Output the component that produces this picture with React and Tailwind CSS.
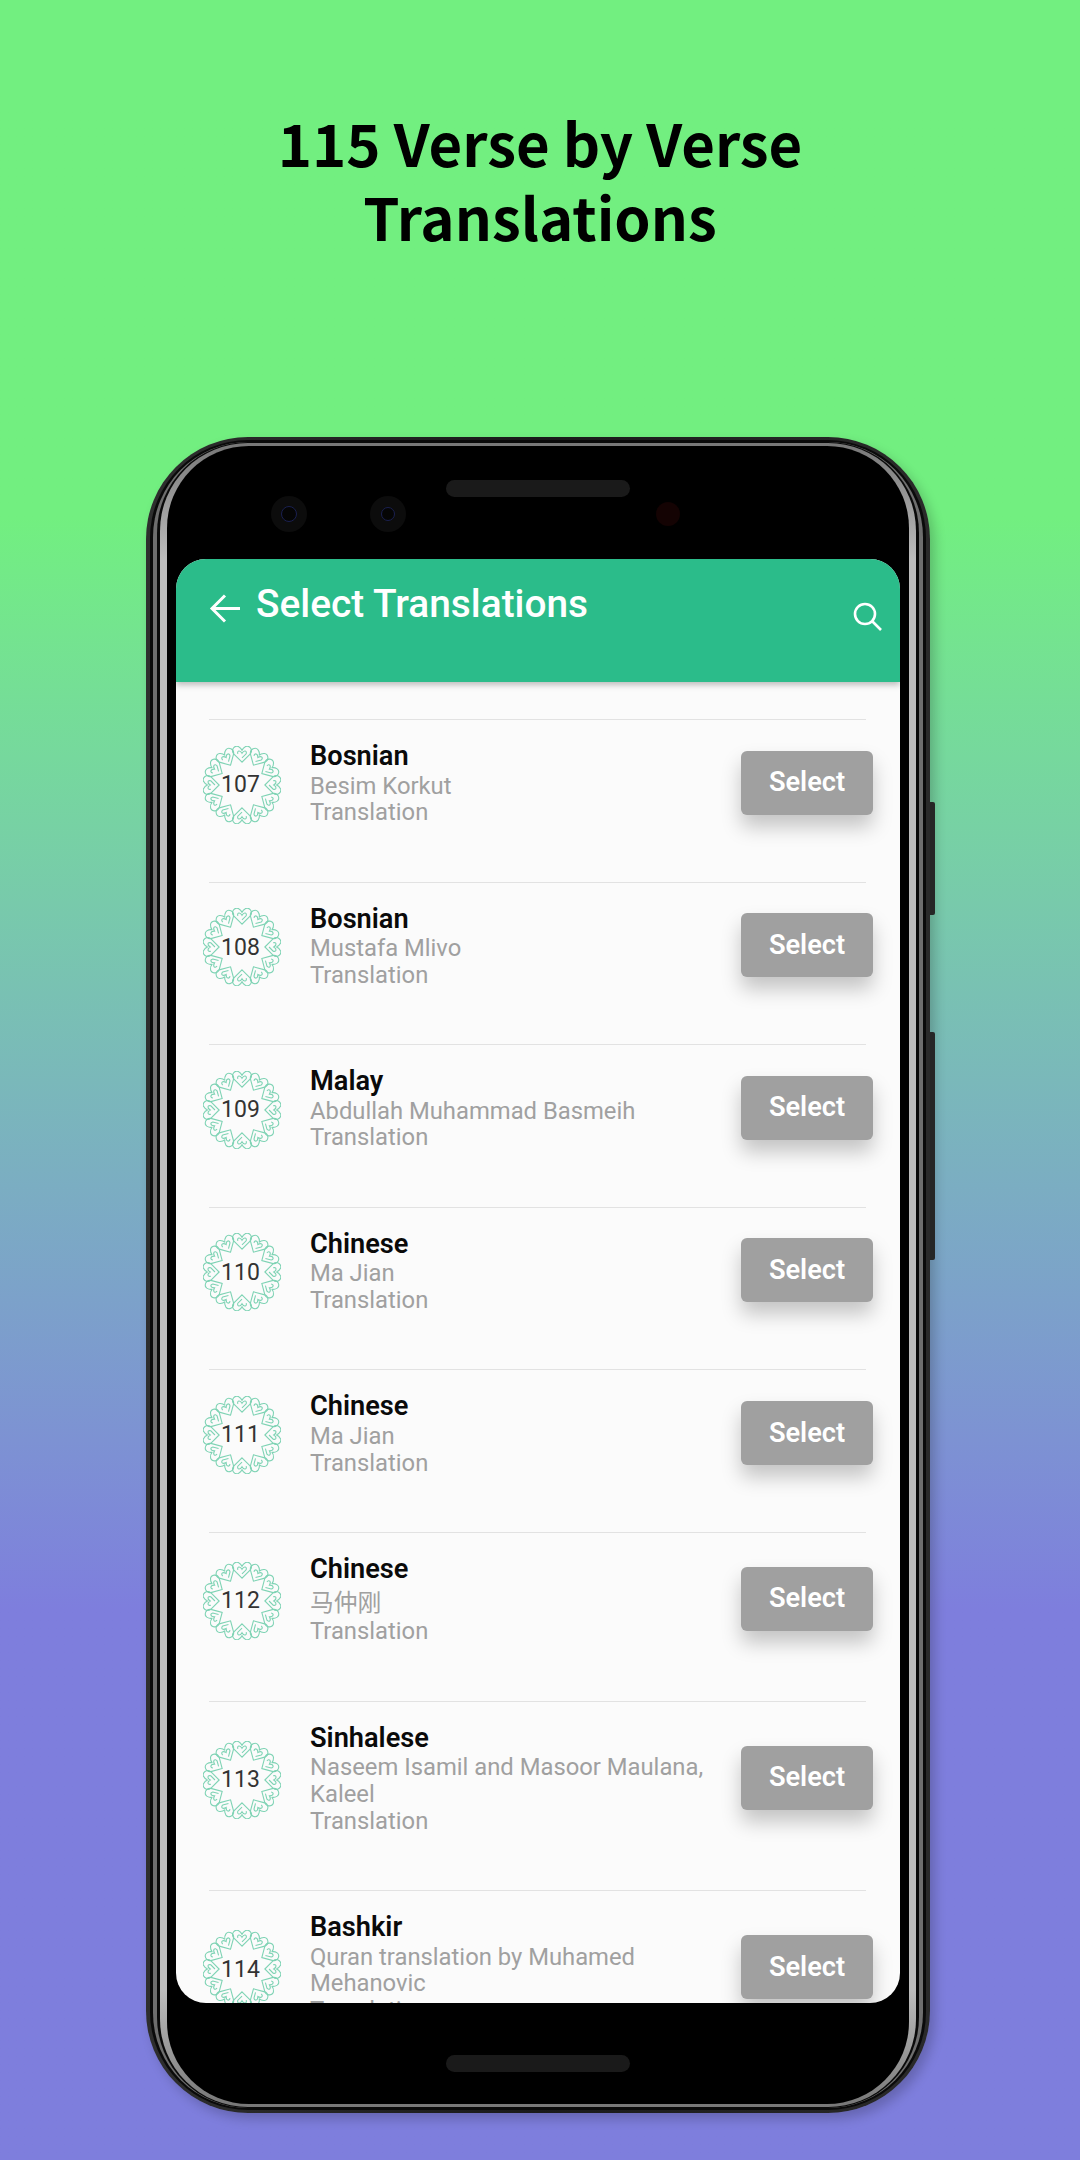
const rows = [
  { n: 107, lang: "Bosnian", author: "Besim Korkut" },
  { n: 108, lang: "Bosnian", author: "Mustafa Mlivo" },
  { n: 109, lang: "Malay", author: "Abdullah Muhammad Basmeih" },
  { n: 110, lang: "Chinese", author: "Ma Jian" },
  { n: 111, lang: "Chinese", author: "Ma Jian" },
  { n: 112, lang: "Chinese", author: "马仲刚", cjk: true },
  { n: 113, lang: "Sinhalese", author: "Naseem Isamil and Masoor Maulana, Kaleel" },
  { n: 114, lang: "Bashkir", author: "Quran translation by Muhamed Mehanovic" },
];

const petals = Array.from({ length: 12 }, (_, i) => i * 30);

function Ornament({ n }) {
  return (
    <div className="relative w-[78px] h-[78px] shrink-0 flex items-center justify-center">
      <svg viewBox="-37.5 -37.5 75 75" className="absolute inset-0 w-[78px] h-[78px]" fill="none" stroke="#7ed3b4" strokeWidth="1.05">
        {petals.map((a) => (
          <g key={a} transform={`rotate(${a})`}>
            <path d="M0 -22 L-8 -30 C-11 -34 -7 -38.5 -3.5 -37 C-1.5 -36 -0.5 -35 0 -33 C0.5 -35 1.5 -36 3.5 -37 C7 -38.5 11 -34 8 -30 Z" />
            <path d="M-4 -30 C-5 -33 -2 -34 0 -30.5 C2 -34 5 -33 4 -30 L0 -26" />
          </g>
        ))}
      </svg>
      <span className="relative pr-[3px] font-['Roboto',sans-serif] text-[23px] text-[#333333] leading-none">{n}</span>
    </div>
  );
}

function Row({ n, lang, author, cjk }) {
  return (
    <div>
      <div className="ml-[33px] mr-[34px] h-px bg-[#e2e2e2]" />
      <div className="flex items-center pl-[27px] pr-[27px] pt-[23px] pb-[55.5px]">
        <Ornament n={n} />
        <div className="ml-[29px] flex-1 min-w-0 pr-[20px] text-[23.8px] leading-[26.8px] text-[#a0a0a0]">
          <div className="-mt-[1px] pb-[1px] font-semibold text-[#0a0a0a] text-[27.2px] leading-[29.5px]">{lang}</div>
          <div className={cjk ? "pt-[2px] leading-[33px] font-['Roboto','Noto_Sans_CJK_SC',sans-serif]" : ""}>{author}</div>
          <div className={cjk ? "-mt-[2px]" : ""}>Translation</div>
        </div>
        <div className="w-[132px] h-[64px] mb-[4px] shrink-0 rounded-[6px] bg-[#a0a0a0] flex items-center justify-center text-white font-semibold text-[27.2px] shadow-[0_12px_20px_rgba(0,0,0,0.22)]">
          Select
        </div>
      </div>
    </div>
  );
}

function Camera({ className, lens }) {
  return (
    <div className={`w-[36px] h-[36px] rounded-full bg-[#0c0c0c] flex items-center justify-center ${className}`}>
      <div className={`${lens} rounded-full bg-[#050505] border border-[#1a2050]`} />
    </div>
  );
}

export default function App() {
  return (
    <div className="w-[1080px] h-[2160px] overflow-hidden bg-linear-to-b from-[#72ef80] from-[24%] to-[#7e7edd] to-[74.5%] font-['Roboto',sans-serif]">
      <div className="h-[437px] pt-[105px] text-center text-black font-bold text-[58.1px] leading-[74px] font-['Noto_Sans_CJK_SC','Noto_Sans',sans-serif]">
        115 Verse by Verse
        <br />
        Translations
      </div>
      <div className="relative ml-[146px] w-[784px] h-[1676px] rounded-[102px] bg-linear-to-r from-[#2e2e2e] via-[#1a1a1a] to-[#2a2a2a] px-[4px] py-[3px] shadow-[5px_6px_12px_rgba(0,0,0,0.2)]">
        <div className="absolute -right-[5px] top-[365px] w-[5px] h-[113px] bg-[#262626] rounded-r-[2px]" />
        <div className="absolute -right-[5px] top-[595px] w-[5px] h-[228px] bg-[#262626] rounded-r-[2px]" />
        <div className="h-full rounded-[98px] bg-[#0a0a0a] px-[3px] py-[2px]">
          <div className="h-full rounded-[95px] bg-[#6e6e6e] px-[4px]">
            <div className="h-full rounded-[91px] bg-[#0a0a0a] px-[3px] py-[1px]">
              <div className="h-full rounded-[88px] bg-[linear-gradient(to_bottom,#777777_0%,#bdbdbd_7%,#bdbdbd_93%,#777777_100%)] px-[7px] py-[3px]">
                <div className="h-full rounded-[82px] bg-black px-[9px] flex flex-col">
                  <div className="h-[113px] shrink-0 relative">
                    <div className="absolute left-[270px] top-[34px] w-[184px] h-[17px] rounded-full bg-[#1a1a1a]" />
                    <Camera lens="w-[16px] h-[16px]" className="absolute left-[95px] top-[50px]" />
                    <Camera lens="w-[14px] h-[14px]" className="absolute left-[194px] top-[50px]" />
                    <div className="absolute left-[480px] top-[56px] w-[24px] h-[24px] rounded-full bg-[#140303]" />
                  </div>
                  <div className="h-[1444px] shrink-0 rounded-[30px] overflow-hidden bg-[#fbfbfb] flex flex-col">
                    <div className="relative h-[123px] shrink-0 bg-[#2bbc8a] shadow-[0_3px_6px_rgba(0,0,0,0.25)] z-10 flex items-start text-white">
                      <svg className="ml-[32px] mt-[33px] w-[33px] h-[33px]" viewBox="0 0 33 33" fill="none" stroke="white" strokeWidth="3">
                        <path d="M32 16.5 H4 M17 3.5 L4 16.5 L17 29.5" />
                      </svg>
                      <div className="ml-[15px] mt-[22px] text-[38.85px] leading-[46px] font-medium">Select Translations</div>
                      <svg className="absolute right-[17px] top-[43px] w-[30px] h-[30px]" viewBox="0 0 30 30" fill="none" stroke="white" strokeWidth="2.6">
                        <circle cx="12" cy="12" r="10" />
                        <path d="M19.5 19.5 L28 28" />
                      </svg>
                    </div>
                    <div className="flex-1 overflow-hidden pt-[37px]">
                      {rows.map((r) => (
                        <Row key={r.n} {...r} />
                      ))}
                    </div>
                  </div>
                  <div className="relative flex-1">
                    <div className="absolute left-[270px] top-[52px] w-[184px] h-[17px] rounded-full bg-[#1a1a1a]" />
                  </div>
                </div>
              </div>
            </div>
          </div>
        </div>
      </div>
    </div>
  );
}
